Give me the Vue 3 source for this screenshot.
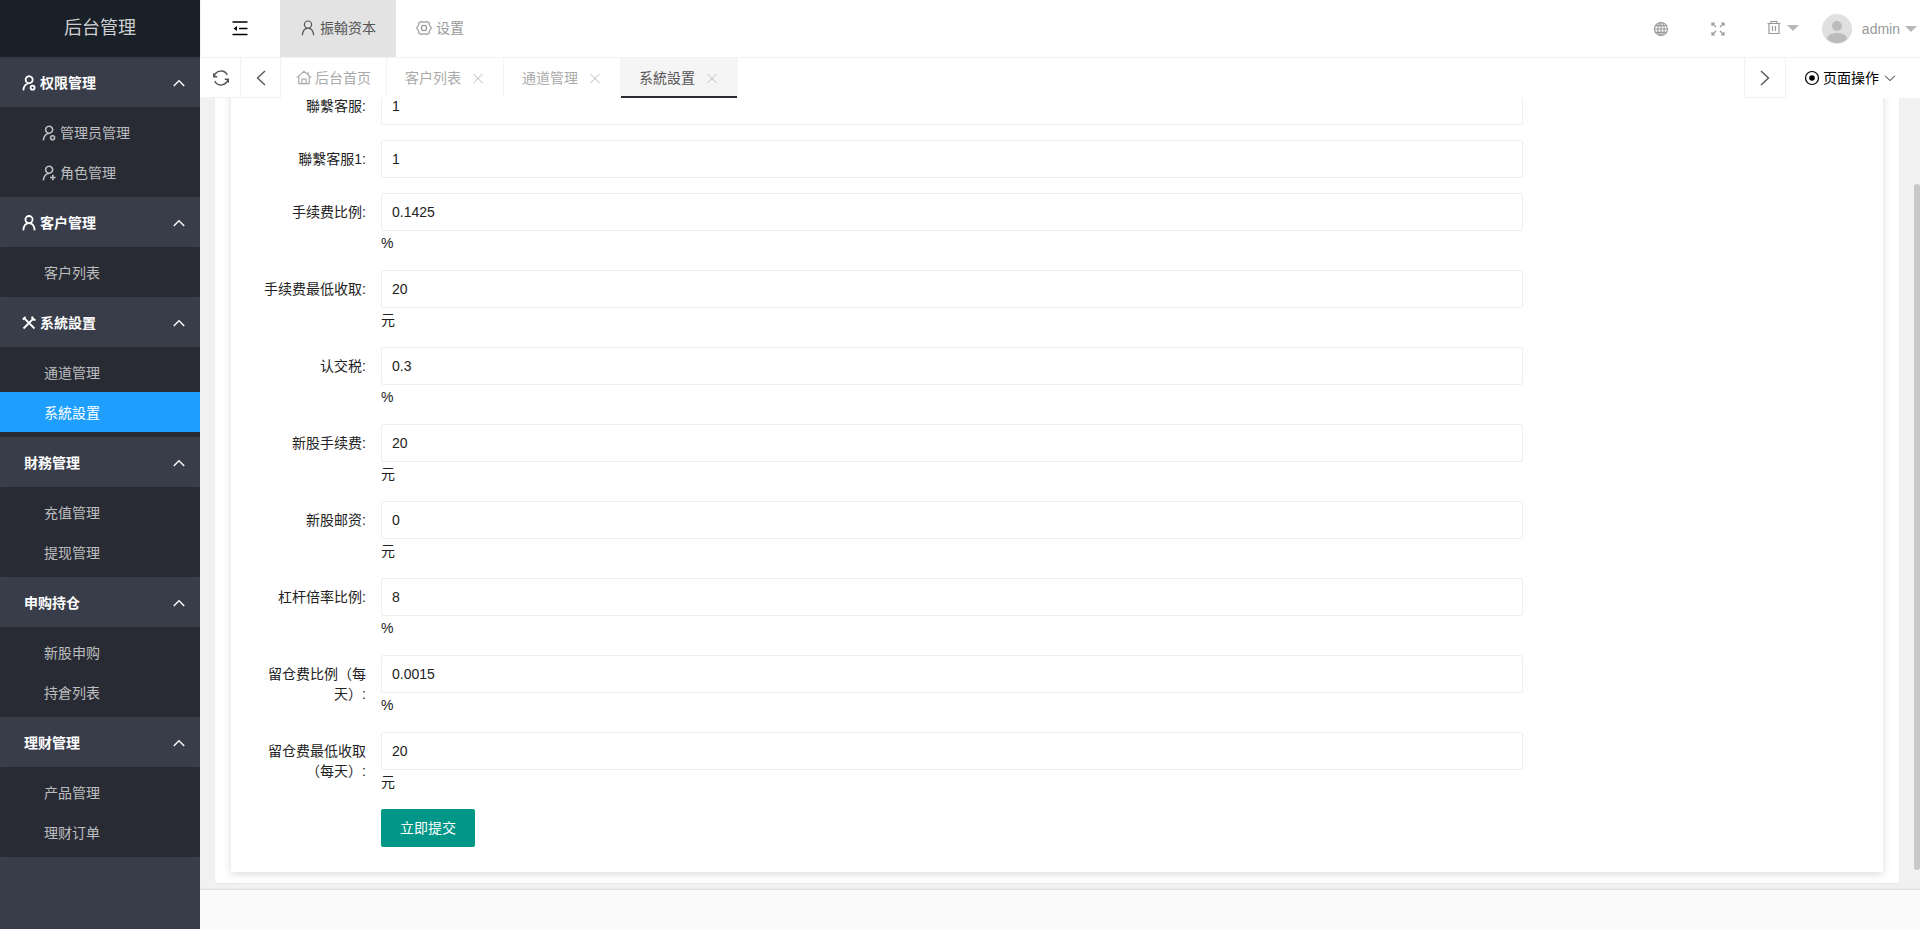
<template>
  <div class="layout">
    <!-- Sidebar -->
    <aside class="sidebar">
      <div class="logo">后台管理</div>
      <nav>
        <section v-for="group in menu" :key="group.title" class="group">
          <button type="button" class="group-title" :class="{ plain: !group.icon }" @click="group.open = !group.open">
            <svg v-if="group.icon" class="icon" viewBox="0 0 16 16"><path :d="icons[group.icon]" /></svg>
            <span>{{ group.title }}</span>
            <svg class="arrow" :class="{ closed: !group.open }" viewBox="0 0 16 16"><path d="M2 11.500L8 5.500l6 6" /></svg>
          </button>
          <div v-show="group.open" class="group-items">
            <a
              v-for="item in group.items"
              :key="item.title"
              href="#"
              :class="{ active: activeItem === item.title }"
              @click.prevent="activeItem = item.title"
            >
              <svg v-if="item.icon" class="icon" viewBox="0 0 16 16"><path :d="icons[item.icon]" /></svg>
              <span>{{ item.title }}</span>
            </a>
          </div>
        </section>
      </nav>
    </aside>

    <div class="body">
      <!-- Top bar -->
      <header class="header">
        <button type="button" class="fold" aria-label="收起菜单">
          <svg class="icon" viewBox="0 0 16 16"><path d="M.5 2h15M7 8.500h8.500M.5 14.500h15" /><path d="M5 6v5L1.500 8.500z" class="solid" /></svg>
        </button>
        <a href="#" class="module current">
          <svg class="icon" viewBox="0 0 16 16"><path :d="icons.user" /></svg>
          <span>振翰资本</span>
        </a>
        <a href="#" class="module">
          <svg class="icon" viewBox="0 0 16 16">
            <path d="M5.400 1.400l1.700.800h1.800l1.700-.8 2.500 1.500.2 1.900.9 1.500 1.100 1.700-1.100 1.700-.9 1.500-.2 1.900-2.500 1.500-1.700-.8H7.100l-1.700.8-2.500-1.500-.2-1.900-.9-1.500L.7 8l1.100-1.700.9-1.500.2-1.900z" />
            <circle cx="8" cy="8" r="2.600" />
          </svg>
          <span>设置</span>
        </a>
        <div class="tools">
          <button type="button" class="tool" aria-label="语言">
            <svg class="icon" viewBox="0 0 16 16">
              <circle cx="8" cy="8" r="6.500" />
              <ellipse cx="8" cy="8" rx="3.200" ry="6.500" />
              <path d="M8 1.500v13M1.500 8h13M2.700 4.700h10.600M2.700 11.300h10.600" />
            </svg>
          </button>
          <button type="button" class="tool" aria-label="全屏">
            <svg class="icon" viewBox="0 0 16 16">
              <path d="M2 5V2h3M2 2l4 4M11 2h3v3M14 2l-4 4M2 11v3h3M2 14l4-4M11 14h3v-3M14 14l-4-4" />
            </svg>
          </button>
          <button type="button" class="tool clear" aria-label="清理缓存">
            <svg class="icon" viewBox="0 0 16 16">
              <path d="M1.500 3.500h13M5 3.500V1.500h6v2M3 3.500v10h10v-10M6.500 6v5M9.500 6v5" />
            </svg>
            <i class="caret"></i>
          </button>
          <button type="button" class="tool account">
            <svg class="avatar" viewBox="0 0 30 30">
              <circle cx="15" cy="15" r="15" fill="#e0e0e0" />
              <circle cx="15" cy="12" r="5" fill="#bbb" />
              <path d="M5 25c0-8 20-8 20 0a14.500 14.500 0 0 1-20 0z" fill="#bbb" />
            </svg>
            <span>admin</span>
            <i class="caret"></i>
          </button>
        </div>
      </header>

      <!-- Tabs -->
      <div class="tabs">
        <button type="button" class="square" aria-label="刷新">
          <svg class="icon" viewBox="0 0 16 16"><path d="M1.200 6.500A7 7 0 0 1 14.300 5M14.800 9.500A7 7 0 0 1 1.700 11M.6 3.200v3.500h3.600M15.400 12.800V9.300h-3.600" /></svg>
        </button>
        <button type="button" class="square" aria-label="向左">
          <svg class="icon" viewBox="0 0 16 16"><path d="M12 1L4.500 8l7.500 7" /></svg>
        </button>
        <a v-for="tab in tabs" :key="tab" href="#" class="tab" :class="{ active: tab === activeTab }" @click.prevent="activeTab = tab">
          <svg v-if="tab === '后台首页'" class="icon" viewBox="0 0 16 16"><path d="M.8 7.600L8 1.200l7.200 6.400M2.800 6v7.700h10.400V6M6 13.500V9.200h4v4.300M12 4.500V2" /></svg>
          <span>{{ tab }}</span>
          <svg v-if="tab !== '后台首页'" class="close" viewBox="0 0 16 16"><path d="M3.500 4l9 9M12.500 4l-9 9" /></svg>
        </a>
        <button type="button" class="square right" aria-label="向右">
          <svg class="icon" viewBox="0 0 16 16"><path d="M4 1l7.500 7L4 15" /></svg>
        </button>
        <button type="button" class="page-ops">
          <svg class="icon" viewBox="0 0 16 16"><circle cx="8" cy="8" r="6.500" /><circle cx="8" cy="8" r="2.800" class="solid" /></svg>
          <span>页面操作</span>
          <svg class="icon down" viewBox="0 0 16 16"><path d="M1.500 5L8 11.500 14.500 5" /></svg>
        </button>
      </div>

      <!-- Page -->
      <main class="page">
        <div class="panel">
          <form class="card" @submit.prevent>
            <div v-for="(field, index) in fields" :key="field.label" class="form-item">
              <label :for="`field-${index}`">{{ field.label }}</label>
              <div class="control">
                <input :id="`field-${index}`" v-model="field.value" type="text" />
                <div v-if="field.unit" class="unit">{{ field.unit }}</div>
              </div>
            </div>
            <div class="form-item">
              <span class="label-space"></span>
              <button type="submit" class="submit">立即提交</button>
            </div>
          </form>
        </div>
        <div class="scrollbar"><div class="thumb"></div></div>
      </main>
      <footer class="footer"></footer>
    </div>
  </div>
</template>

<script setup>
import { ref, reactive } from 'vue';

const personLeft = 'M8.500 8.200a3.500 3.500 0 1 0-3-1.200M8.500 8.200C5 8.500 2.800 11 2.300 15.300M5.500 7c.8.9 1.800 1.200 3 1.200';

const icons = {
  user: 'M8 8.200a3.600 3.600 0 1 0 0-7.200a3.600 3.600 0 0 0 0 7.200zM2.300 15.300C2.700 11 4.500 8.200 8 8.200s5.300 2.800 5.700 7.100',
  admin: `${personLeft}M9.600 12.700a2 2 0 1 0 4 0a2 2 0 1 0-4 0`,
  role: `${personLeft}M11.800 9.800v5.400M9 12.500h5.600`,
  tools: 'M3 3l10.500 10.500M13 3L2.500 13.500M1.800 4.500l2.700-2.700M11 1.500l.5 3 3 .5',
};

// Menu groups
const menu = reactive([
  {
    title: '权限管理',
    icon: 'admin',
    open: true,
    items: [
      { title: '管理员管理', icon: 'admin' },
      { title: '角色管理', icon: 'role' },
    ],
  },
  { title: '客户管理', icon: 'user', open: true, items: [{ title: '客户列表' }] },
  { title: '系統設置', icon: 'tools', open: true, items: [{ title: '通道管理' }, { title: '系統設置' }] },
  { title: '財務管理', open: true, items: [{ title: '充值管理' }, { title: '提现管理' }] },
  { title: '申购持仓', open: true, items: [{ title: '新股申购' }, { title: '持倉列表' }] },
  { title: '理财管理', open: true, items: [{ title: '产品管理' }, { title: '理财订单' }] },
]);
const activeItem = ref('系統設置');

// Opened tabs
const tabs = ['后台首页', '客户列表', '通道管理', '系統設置'];
const activeTab = ref('系統設置');

// Settings form
const fields = reactive([
  { label: '聯繫客服:', value: '1' },
  { label: '聯繫客服1:', value: '1' },
  { label: '手续费比例:', value: '0.1425', unit: '%' },
  { label: '手续费最低收取:', value: '20', unit: '元' },
  { label: '认交税:', value: '0.3', unit: '%' },
  { label: '新股手续费:', value: '20', unit: '元' },
  { label: '新股邮资:', value: '0', unit: '元' },
  { label: '杠杆倍率比例:', value: '8', unit: '%' },
  { label: '留仓费比例（每天）:', value: '0.0015', unit: '%' },
  { label: '留仓费最低收取（每天）:', value: '20', unit: '元' },
]);
</script>

<style>
body {
  margin: 0;
}
</style>

<style scoped>
.layout {
  display: flex;
  height: 100vh;
  overflow: hidden;
  color: #222;
  font: 14px/24px "Liberation Sans", "Noto Sans CJK SC", sans-serif;
}

.layout * {
  box-sizing: border-box;
}

a {
  color: inherit;
  text-decoration: none;
}

button {
  margin: 0;
  padding: 0;
  border: none;
  background: none;
  color: inherit;
  font: inherit;
  cursor: pointer;
}

.icon {
  width: 16px;
  height: 16px;
  flex: none;
  fill: none;
  stroke: currentColor;
  stroke-width: 1.2;
}

.solid {
  fill: currentColor;
  stroke: none;
}

/* Sidebar */
.sidebar {
  flex: none;
  width: 200px;
  background: #393d49;
}

.logo {
  height: 57px;
  background: #192027;
  color: rgba(255, 255, 255, 0.8);
  font-size: 18px;
  line-height: 56px;
  text-align: center;
  box-shadow: 0 1px 2px rgba(0, 0, 0, 0.15);
}

.group-title {
  display: flex;
  align-items: center;
  gap: 3px;
  width: 100%;
  height: 50px;
  padding: 1px 14px 0 21px;
  color: #fff;
  font-weight: bold;
}

.group-title.plain {
  padding-left: 24px;
}

.group-title .icon {
  stroke-width: 1.8;
}

.arrow {
  width: 14px;
  height: 14px;
  margin-left: auto;
  fill: none;
  stroke: currentColor;
  stroke-width: 1.6;
}

.arrow.closed {
  transform: rotate(180deg);
}

.group-items {
  padding: 5px 0;
  border-radius: 2px;
  background: #282b33;
}

.group-items a {
  display: flex;
  align-items: center;
  gap: 3px;
  height: 40px;
  padding: 1px 0 0 44px;
  color: rgba(255, 255, 255, 0.7);
}

.group-items a:has(.icon) {
  padding-left: 41px;
}

.group-items .icon {
  stroke-width: 1.6;
}

.group-items a.active {
  background: #1e9fff;
  color: #fff;
}

/* Top bar */
.body {
  display: flex;
  flex: 1;
  flex-direction: column;
  min-width: 0;
}

.header {
  display: flex;
  flex: none;
  height: 58px;
  border-bottom: 1px solid #f2f2f2;
  color: #999;
}

.fold {
  width: 80px;
  padding-bottom: 2px;
  color: #000;
  line-height: 0;
}

.fold .icon {
  stroke-width: 1.5;
}

.module {
  display: flex;
  align-items: center;
  gap: 4px;
  padding: 0 20px 2px;
}

.module.current {
  background: #e3e3e3;
  color: #555;
}

.tools {
  display: flex;
  align-items: center;
  margin-left: auto;
}

.tool {
  display: flex;
  align-items: center;
  justify-content: center;
  width: 57px;
  height: 56px;
}

.tool.clear {
  gap: 5px;
  width: 72px;
  padding-bottom: 2px;
}

.tool.account {
  gap: 10px;
  width: auto;
  padding: 0 3px;
}

.account .caret {
  margin-left: -5px;
}

.caret {
  border: 6px solid transparent;
  border-top-color: #b8b8b8;
  border-bottom-width: 0;
}

.avatar {
  width: 30px;
  height: 30px;
}

/* Tabs */
.tabs {
  display: flex;
  flex: none;
  height: 40px;
  padding-left: 1px;
}

.square {
  display: flex;
  align-items: center;
  justify-content: center;
  width: 40px;
  border: 1px solid #f2f2f2;
  border-width: 0 1px 1px 0;
  color: #555;
}

.square.right {
  width: 42px;
  margin-left: auto;
  border-left-width: 1px;
}

.square .icon {
  stroke-width: 1.4;
}

.tab {
  display: flex;
  align-items: center;
  gap: 3px;
  padding: 0 15px;
  border-right: 1px solid #f5f5f5;
  color: #aaa;
}

.tab:has(.close) {
  gap: 9px;
  padding: 0 17px 0 18px;
}

.tab.active {
  background: #f5f5f5;
  box-shadow: inset 0 -2px #282b33;
  color: #555;
}

.close {
  width: 16px;
  height: 16px;
  fill: none;
  stroke: #bbb;
}

.page-ops {
  display: flex;
  align-items: center;
  gap: 3px;
  padding: 0 24px 0 18px;
  color: #000;
}

.page-ops .down {
  width: 12px;
  height: 12px;
  margin-left: 2px;
}

/* Page */
.page {
  position: relative;
  display: flex;
  flex: 1;
  flex-direction: column;
  justify-content: flex-end;
  min-height: 0;
  padding: 0 21px 7px 15px;
  overflow: hidden;
  background: #f1f1f1;
}

.panel {
  flex: none;
  padding: 16px 16px 11px;
  border-radius: 2px;
  background: #fff;
  box-shadow: 0 1px 2px rgba(0, 0, 0, 0.05);
}

.card {
  padding: 10px 360px 10px 0;
  box-shadow: 0 2px 8px rgba(0, 0, 0, 0.15);
}

.form-item {
  display: flex;
  margin-bottom: 15px;
}

.form-item label,
.label-space {
  flex: none;
  width: 150px;
  padding: 9px 15px 0 30px;
}

.form-item label {
  line-height: 20px;
  text-align: right;
}

.control {
  flex: 1;
}

.control input {
  display: block;
  width: 100%;
  height: 38px;
  padding: 0 10px;
  border: 1px solid #eee;
  border-radius: 2px;
  background: #fff;
  color: #222;
  font: inherit;
  outline: none;
}

.submit {
  height: 38px;
  padding: 0 19px;
  border-radius: 2px;
  background: #009688;
  color: #fff;
}

.scrollbar {
  position: absolute;
  top: 0;
  right: 0;
  bottom: 0;
  width: 6px;
  padding: 86px 0 20px;
}

.thumb {
  height: 100%;
  border-radius: 3px;
  background: #c8c8c8;
}

.footer {
  z-index: 1;
  flex: none;
  height: 39px;
  background: #fafafa;
  box-shadow: 0 -1px 2px rgba(0, 0, 0, 0.1);
}
</style>
